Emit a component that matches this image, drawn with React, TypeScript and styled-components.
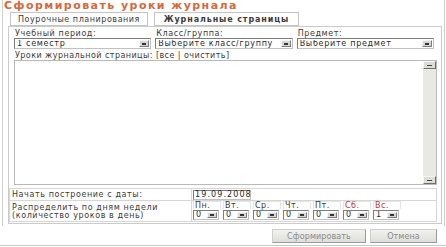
import React from "react";
import styled, { createGlobalStyle } from "styled-components";

const Global = createGlobalStyle`
  html, body { margin: 0; padding: 0; background: #fff; }
  body {
    font-family: "DejaVu Sans", Verdana, sans-serif;
    font-size: 8px;
    color: #3a3a3a;
  }
  * { box-sizing: border-box; }
`;

const Dialog = styled.div`
  width: 446px;
  height: 247px;
  padding: 0 1px 0 2px;
  display: flex;
  flex-direction: column;
  overflow: hidden;
`;

const Body = styled.div`
  display: flex;
  flex-direction: column;
  border-left: 1px solid #cfcfcf;
  border-right: 1px solid #cfcfcf;
  padding-bottom: 2px;
`;

const Title = styled.div`
  height: 12px;
  padding-left: 1px;
  font-size: 11px;
  line-height: 11px;
  font-weight: bold;
  letter-spacing: 1.45px;
  color: #d26a3e;
  white-space: nowrap;
`;

const Tabs = styled.div`
  display: flex;
  gap: 6px;
  margin-left: 7px;
  height: 14px;
`;

const Tab = styled.div<{ $active?: boolean; $w: number }>`
  width: ${(p) => p.$w}px;
  height: 14px;
  border: 1px solid #c4c4c4;
  display: flex;
  align-items: center;
  justify-content: center;
  letter-spacing: ${(p) => (p.$active ? "0.9px" : "0.55px")};
  font-weight: ${(p) => (p.$active ? "bold" : "normal")};
  white-space: nowrap;
`;

const Panel = styled.div`
  margin: 0 2px 0 5px;
  height: 198px;
  border: 1px solid #cbcbcb;
  padding: 2px 4px 0 5px;
  display: flex;
  flex-direction: column;
`;

const FilterRow = styled.div`
  display: flex;
  gap: 4px;
  margin-right: 3px;
`;

const Field = styled.div`
  flex: 1;
  min-width: 0;
  display: flex;
  flex-direction: column;
`;

const Label = styled.div`
  line-height: 9px;
  height: 9px;
  padding-left: 1px;
  letter-spacing: 0.6px;
  white-space: nowrap;
`;

const SelectBox = styled.div<{ $w?: number; $h: number }>`
  ${(p) => (p.$w ? `width: ${p.$w}px;` : "")}
  height: ${(p) => p.$h}px;
  border: 1px solid #7c7c7c;
  border-right-color: #c0c0c0;
  border-bottom-color: #c0c0c0;
  background: #fff;
  display: flex;
  align-items: center;
  padding-left: 2px;
  letter-spacing: 0.72px;
  white-space: nowrap;
  color: #2a2a2a;
`;

const SelectText = styled.span`
  flex: 1;
  overflow: hidden;
  line-height: 8px;
`;

const DropButton = styled.span<{ $h: number }>`
  flex: none;
  width: 10px;
  height: ${(p) => p.$h}px;
  margin-right: 1px;
  background: #d6d6d2;
  border: 1px solid #f4f4f4;
  border-right-color: #7c7c7c;
  border-bottom-color: #7c7c7c;
  display: flex;
  align-items: center;
  justify-content: center;
  &::after {
    content: "";
    width: 4px;
    height: 2px;
    background: #333;
  }
`;

const LessonsLabel = styled.div`
  margin-top: 2px;
  line-height: 9px;
  height: 9px;
  padding-left: 1px;
  letter-spacing: 0.45px;
  white-space: nowrap;
`;

const ListBox = styled.div`
  height: 125px;
  border: 1px solid #b9b9b9;
  display: flex;
  justify-content: flex-end;
`;

const Scrollbar = styled.div`
  width: 13px;
  display: flex;
  flex-direction: column;
  justify-content: space-between;
  background: #e9e9e3;
`;

const ScrollArrow = styled.div`
  height: 8px;
  background: #dcdcd6;
  border: 1px solid #f6f6f6;
  border-right-color: #6e6e6e;
  border-bottom-color: #6e6e6e;
  display: flex;
  align-items: center;
  justify-content: center;
  &::after {
    content: "";
    width: 5px;
    height: 1px;
    background: #444;
  }
`;

const ParamTable = styled.div`
  margin: 3px 0 0 -5px;
  display: grid;
  grid-template-columns: 182px 1fr;
  grid-template-rows: 12px 21px;
  border-top: 1px solid #d6d6d6;
  border-left: 1px solid #d6d6d6;
`;

const Cell = styled.div<{ $pad?: number }>`
  border-right: 1px solid #d6d6d6;
  border-bottom: 1px solid #d6d6d6;
  display: flex;
  align-items: center;
  padding-left: ${(p) => p.$pad ?? 1}px;
  letter-spacing: 0.6px;
  white-space: nowrap;
`;

const TwoLine = styled.div`
  line-height: 7.5px;
  padding-top: 1px;
`;

const DateInput = styled.div`
  width: 58px;
  height: 10px;
  border: 1px solid #7c7c7c;
  border-right-color: #c0c0c0;
  border-bottom-color: #c0c0c0;
  line-height: 8px;
  padding-left: 1px;
  letter-spacing: 1.1px;
  color: #2a2a2a;
`;

const Days = styled.div`
  display: flex;
  align-self: flex-end;
  padding-bottom: 1px;
`;

const DayCol = styled.div`
  width: 30px;
  display: flex;
  flex-direction: column;
`;

const DayLabel = styled.div<{ $red?: boolean }>`
  width: 28px;
  height: 8px;
  line-height: 8px;
  border-top: 1px solid #e4e4e4;
  border-left: 1px solid #e4e4e4;
  border-right: 1px solid #e4e4e4;
  padding-left: 1px;
  margin-bottom: 1px;
  letter-spacing: 0.5px;
  color: ${(p) => (p.$red ? "#b8343c" : "#3a3a3a")};
`;

const Footer = styled.div`
  margin: 0 -1px 0 -2px;
  padding: 3px 9px 2px 0;
  border-bottom: 1px solid #c8c8c8;
  display: flex;
  justify-content: flex-end;
  gap: 4px;
`;

const Button = styled.div<{ $w: number }>`
  width: ${(p) => p.$w}px;
  height: 14px;
  background: linear-gradient(#f1f1ee, #dededa);
  border: 1px solid #cfcfcf;
  border-right-color: #9a9a9a;
  border-bottom-color: #9a9a9a;
  display: flex;
  align-items: center;
  justify-content: center;
  color: #8a8a8a;
  letter-spacing: 0.1px;
`;

const Select = ({ text, w, h = 11 }: { text: string; w?: number; h?: number }) => (
  <SelectBox $w={w} $h={h}>
    <SelectText>{text}</SelectText>
    <DropButton $h={h - 4} />
  </SelectBox>
);

const days = [
  { d: "Пн.", v: "0" },
  { d: "Вт.", v: "0" },
  { d: "Ср.", v: "0" },
  { d: "Чт.", v: "0" },
  { d: "Пт.", v: "0" },
  { d: "Сб.", v: "0", red: true },
  { d: "Вс.", v: "1", red: true },
];

export default function App() {
  return (
    <>
      <Global />
      <Dialog>
        <Body>
          <Title>Сформировать уроки журнала</Title>
          <Tabs>
            <Tab $w={138}>Поурочные планирования</Tab>
            <Tab $w={145} $active>
              Журнальные страницы
            </Tab>
          </Tabs>
          <Panel>
            <FilterRow>
              <Field>
                <Label>Учебный период:</Label>
                <Select text="1 семестр" />
              </Field>
              <Field>
                <Label>Класс/группа:</Label>
                <Select text="Выберите класс/группу" />
              </Field>
              <Field>
                <Label>Предмет:</Label>
                <Select text="Выберите предмет" />
              </Field>
            </FilterRow>
            <LessonsLabel>Уроки журнальной страницы: [все | очистить]</LessonsLabel>
            <ListBox>
              <Scrollbar>
                <ScrollArrow />
                <ScrollArrow />
              </Scrollbar>
            </ListBox>
            <ParamTable>
              <Cell $pad={2}>Начать построение с даты:</Cell>
              <Cell>
                <DateInput>19.09.2008</DateInput>
              </Cell>
              <Cell $pad={2}>
                <TwoLine>
                  Распределить по дням недели
                  <br />
                  (количество уроков в день)
                </TwoLine>
              </Cell>
              <Cell>
                <Days>
                  {days.map((x) => (
                    <DayCol key={x.d}>
                      <DayLabel $red={x.red}>{x.d}</DayLabel>
                      <Select text={x.v} w={26} h={10} />
                    </DayCol>
                  ))}
                </Days>
              </Cell>
            </ParamTable>
          </Panel>
        </Body>
        <Footer>
          <Button $w={94}>Сформировать</Button>
          <Button $w={67}>Отмена</Button>
        </Footer>
      </Dialog>
    </>
  );
}
